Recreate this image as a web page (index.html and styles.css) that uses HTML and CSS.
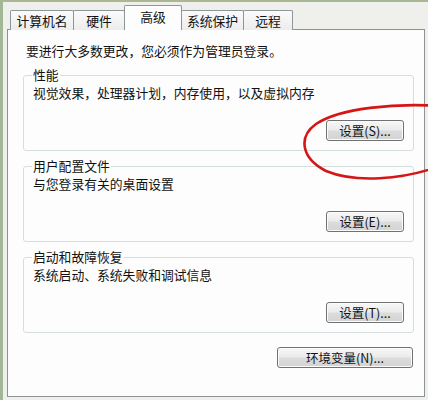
FILE: index.html
```html
<!DOCTYPE html>
<html lang="zh-CN">
<head>
<meta charset="utf-8">
<link rel="stylesheet" href="styles.css">
</head>
<body>
<div class="window">
  <div class="tabs">
    <div class="tab t1">计算机名</div>
    <div class="tab t2">硬件</div>
    <div class="tab t3 active">高级</div>
    <div class="tab t4">系统保护</div>
    <div class="tab t5">远程</div>
  </div>
  <div class="panel">
    <p class="intro">要进行大多数更改，您必须作为管理员登录。</p>
    <fieldset class="group first">
      <legend>性能</legend>
      <p class="desc">视觉效果，处理器计划，内存使用，以及虚拟内存</p>
      <div class="row"><button class="btn small">设置(S)...</button></div>
    </fieldset>
    <fieldset class="group">
      <legend>用户配置文件</legend>
      <p class="desc">与您登录有关的桌面设置</p>
      <div class="row"><button class="btn small">设置(E)...</button></div>
    </fieldset>
    <fieldset class="group">
      <legend>启动和故障恢复</legend>
      <p class="desc">系统启动、系统失败和调试信息</p>
      <div class="row"><button class="btn small">设置(T)...</button></div>
    </fieldset>
    <div class="row env"><button class="btn wide">环境变量(N)...</button></div>
  </div>
  <svg class="mark" width="150" height="95" viewBox="290 95 150 95">
    <path d="M440,106 C395,103 340,108 316,124 C298,137 301,158 326,171 C355,183 402,180 440,166" fill="none" stroke="#d41616" stroke-width="2.6" stroke-linecap="round"/>
  </svg>
</div>
</body>
</html>
```

FILE: styles.css
```css
html, body {
  margin: 0;
  padding: 0;
}
body {
  width: 428px;
  height: 400px;
  overflow: hidden;
  background: #efefec;
  font-family: "Noto Sans CJK SC", "Noto Sans", sans-serif;
  font-size: 12.8px;
  color: #111;
}
.window {
  position: relative;
  height: 398px;
  border-top: 2px solid #a9b793;
  border-left: 3px solid #a2b795;
  box-sizing: content-box;
}
.tabs {
  display: flex;
  align-items: flex-end;
  height: 28px;
  padding-left: 7px;
  margin-bottom: -1px;
  position: relative;
  z-index: 2;
}
.tab {
  box-sizing: border-box;
  height: 20px;
  border: 1px solid #8f969a;
  border-bottom: none;
  border-radius: 2px 2px 0 0;
  background: linear-gradient(#fbfbfb, #ececec);
  text-align: center;
  line-height: 19px;
  font-size: 12.8px;
  margin-left: -1px;
}
.t1 { width: 64px; margin-left: 0; }
.t2 { width: 52px; }
.t3 { width: 57px; }
.t4 { width: 63px; }
.t5 { width: 50px; }
.tab.active {
  height: 25px;
  background: #fdfdfd;
  line-height: 22px;
  position: relative;
  z-index: 3;
  margin-right: -1px;
  width: 58px;
}
.t4 { margin-left: 0; }
.panel {
  margin-left: 4px;
  width: 418px;
  height: 368px;
  box-sizing: border-box;
  border: 1px solid #8c9296;
  background: #fdfdfd;
  padding-top: 13px;
}
.intro {
  margin: 0 0 0 18px;
  line-height: 16px;
}
.group {
  margin: 8px 10px 0 15px;
  padding: 0 9px 9px 8px;
  border: 1px solid #d6dde1;
  border-radius: 3px;
  min-width: 0;
}
.group.first {
  margin-top: 9px;
}
.group legend {
  padding: 0 1px;
  line-height: 14px;
}
.desc {
  margin: 3px 0 0 1px;
  line-height: 16px;
}
.row {
  display: flex;
  justify-content: flex-end;
}
.btn {
  font-family: "Noto Sans CJK SC", "Noto Sans", sans-serif;
  font-size: 12.5px;
  color: #111;
  height: 21px;
  padding: 0;
  border: 1px solid #6f7275;
  border-radius: 3px;
  background: linear-gradient(#f7f7f7 0%, #ebebeb 48%, #dcdcdc 52%, #d3d3d3 100%);
  line-height: 18px;
  box-shadow: inset 0 0 0 1px #fbfbfb;
}
.btn.small {
  width: 78px;
  margin-top: 19px;
}
.env {
  margin: 14px 11px 0 0;
}
.btn.wide {
  width: 136px;
}
.mark {
  position: absolute;
  left: 287px;
  top: 93px;
  overflow: visible;
  pointer-events: none;
}
```
